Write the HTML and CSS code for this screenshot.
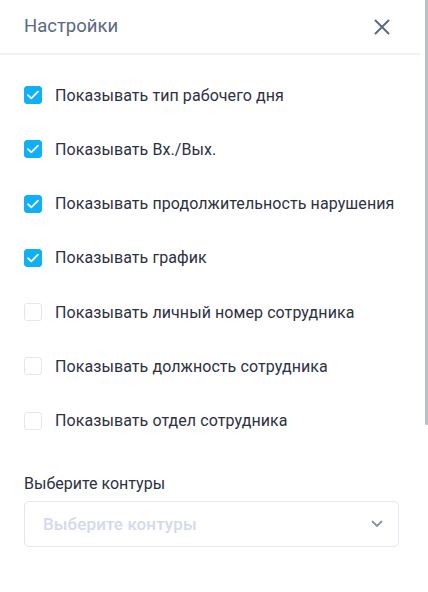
FILE: index.html
```html
<!DOCTYPE html>
<html lang="ru">
<head>
<meta charset="utf-8">
<link rel="stylesheet" href="styles.css">
</head>
<body>
<div class="panel">
  <div class="header">
    <span class="title">Настройки</span>
    <button class="close" aria-label="close">
      <svg width="16" height="16" viewBox="0 0 16 16"><path d="M1.5 1.5 L14.5 14.5 M14.5 1.5 L1.5 14.5" stroke="#5c6b84" stroke-width="2" stroke-linecap="round" fill="none"/></svg>
    </button>
  </div>
  <div class="body">
    <label class="row"><span class="cb on"><svg width="12" height="10" viewBox="0 0 12 10"><path d="M1 5.2 L4.3 8.4 L11 1.6" stroke="#fff" stroke-width="1.8" fill="none" stroke-linecap="round" stroke-linejoin="round"/></svg></span><span class="txt">Показывать тип рабочего дня</span></label>
    <label class="row"><span class="cb on"><svg width="12" height="10" viewBox="0 0 12 10"><path d="M1 5.2 L4.3 8.4 L11 1.6" stroke="#fff" stroke-width="1.8" fill="none" stroke-linecap="round" stroke-linejoin="round"/></svg></span><span class="txt">Показывать Вх./Вых.</span></label>
    <label class="row"><span class="cb on"><svg width="12" height="10" viewBox="0 0 12 10"><path d="M1 5.2 L4.3 8.4 L11 1.6" stroke="#fff" stroke-width="1.8" fill="none" stroke-linecap="round" stroke-linejoin="round"/></svg></span><span class="txt">Показывать продолжительность нарушения</span></label>
    <label class="row"><span class="cb on"><svg width="12" height="10" viewBox="0 0 12 10"><path d="M1 5.2 L4.3 8.4 L11 1.6" stroke="#fff" stroke-width="1.8" fill="none" stroke-linecap="round" stroke-linejoin="round"/></svg></span><span class="txt">Показывать график</span></label>
    <label class="row"><span class="cb"></span><span class="txt">Показывать личный номер сотрудника</span></label>
    <label class="row"><span class="cb"></span><span class="txt">Показывать должность сотрудника</span></label>
    <label class="row"><span class="cb"></span><span class="txt">Показывать отдел сотрудника</span></label>
    <div class="field">
      <div class="field-label">Выберите контуры</div>
      <div class="select">
        <span class="placeholder">Выберите контуры</span>
        <svg width="12" height="8" viewBox="0 0 12 8"><path d="M1.5 1.5 L6 6 L10.5 1.5" stroke="#8a94a8" stroke-width="1.8" fill="none" stroke-linecap="round" stroke-linejoin="round"/></svg>
      </div>
    </div>
  </div>
  <div class="scrollthumb"></div>
</div>
</body>
</html>
```
FILE: styles.css
```css
* { box-sizing: border-box; }
html, body { margin: 0; padding: 0; background: #fff; }
body { font-family: Roboto, "Noto Sans", sans-serif; width: 428px; height: 592px; overflow: hidden; }
.panel { position: relative; width: 428px; height: 592px; }
.header {
  height: 55px;
  display: flex;
  align-items: center;
  justify-content: space-between;
  padding: 0 30px 0 24px;
  margin-right: 8px;
  border-bottom: 2px solid #f2f2f4;
}
.title { font-size: 18.5px; color: #5a6880; padding-bottom: 2px; }
.close { background: none; border: 0; padding: 0; width: 16px; height: 16px; display: flex; cursor: pointer; }
.body { padding: 31px 24px 0 24px; display: flex; flex-direction: column; }
.row { display: flex; align-items: center; height: 18px; margin-bottom: 36.3px; gap: 13px; }
.cb {
  width: 18px; height: 18px; border-radius: 3px;
  border: 1px solid #e3e6ee; background: #fff;
  display: flex; align-items: center; justify-content: center; flex: none;
}
.cb.on { background: #0fb0f5; border-color: #0fb0f5; }
.txt { font-size: 16px; color: #2d3142; letter-spacing: 0.08px; }
.field { margin-top: 8px; }
.field-label { font-size: 16px; color: #2d3142; margin-bottom: 8px; }
.select {
  width: 375px; height: 46px;
  border: 1px solid #e3e7f0; border-radius: 5px;
  display: flex; align-items: center; justify-content: space-between;
  padding: 0 15px 0 18px;
}
.placeholder { font-size: 17px; font-weight: 500; color: #d4d9ed; letter-spacing: 0.1px; }
.scrollthumb { position: absolute; right: 0; top: 0; width: 3px; height: 425px; background: #b9bfcb; border-radius: 0 0 2px 2px; }
```
